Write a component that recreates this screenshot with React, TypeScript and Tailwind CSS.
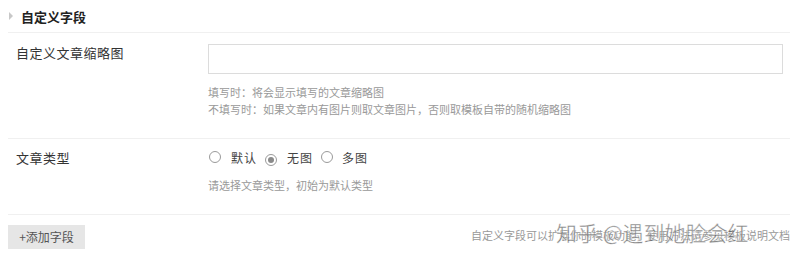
import React from "react";

const font = { fontFamily: '"Noto Sans CJK SC", "Noto Sans", sans-serif' };

function Radio({ checked }: { checked?: boolean }) {
  return (
    <span className="inline-flex h-[12px] w-[12px] items-center justify-center rounded-full border border-[#9a9a9a] bg-white">
      {checked && <span className="h-[6px] w-[6px] rounded-full bg-[#8a8a8a]" />}
    </span>
  );
}

export default function App() {
  return (
    <div className="relative h-[256px] w-[802px] overflow-hidden bg-white text-[#333]" style={font}>
      <div className="w-[790px]">
        {/* header */}
        <div className="flex h-[32px] items-center pl-[9px]">
          <span className="mr-[8px] h-0 w-0 border-y-[4px] border-l-[4px] border-y-transparent border-l-[#c8c8c8]" />
          <span className="text-[13px] font-bold leading-none text-[#222]">自定义字段</span>
        </div>
        <div className="ml-[8px] h-px bg-[#f0f0f0]" />

        {/* row 1 */}
        <div className="flex pt-[11px] pb-[20px]">
          <div className="w-[208px] pl-[16px] pt-[1px] text-[13px] leading-[16px] tracking-[0.5px] text-[#333]">
            自定义文章缩略图
          </div>
          <div className="flex-1">
            <div className="h-[30px] w-[575px] border border-[#dcdcdc] bg-white" />
            <div className="mt-[10px] text-[11px] leading-[17px] text-[#999]">
              <div>填写时：将会显示填写的文章缩略图</div>
              <div>不填写时：如果文章内有图片则取文章图片，否则取模板自带的随机缩略图</div>
            </div>
          </div>
        </div>
        <div className="ml-[8px] h-px bg-[#f0f0f0]" />

        {/* row 2 */}
        <div className="flex pt-[10px] pb-[20px]">
          <div className="w-[208px] pl-[16px] text-[13px] leading-[18px] tracking-[0.5px] text-[#333]">文章类型</div>
          <div className="flex-1">
            <div className="flex h-[18px] items-center text-[12px] tracking-[1px] text-[#444]">
              <span className="ml-[1px]"><Radio /></span>
              <span className="ml-[10px]">默认</span>
              <span className="ml-[8px]"><Radio checked /></span>
              <span className="ml-[10px]">无图</span>
              <span className="ml-[8px]"><Radio /></span>
              <span className="ml-[9px]">多图</span>
            </div>
            <div className="mt-[10px] text-[11px] leading-[17px] text-[#999]">请选择文章类型，初始为默认类型</div>
          </div>
        </div>
        <div className="ml-[8px] h-px bg-[#f0f0f0]" />

        {/* footer */}
        <div className="flex items-center justify-between pt-[10px] pl-[8px]">
          <button className="h-[24px] w-[77px] bg-[#e6e6e6] text-[12px] text-[#555]">+添加字段</button>
          <div className="mb-[3px] text-[11px] text-[#999]">自定义字段可以扩展你的模板功能，使用方法请参见模板说明文档</div>
        </div>
      </div>

      {/* watermark */}
      <div
        className="pointer-events-none absolute left-[556px] top-[222px] text-[21px] leading-none text-[#555]/70"
        style={{ WebkitTextStroke: "0.5px rgba(255,255,255,0.8)" }}
      >
        知乎 @遇到她脸会红
      </div>
    </div>
  );
}
